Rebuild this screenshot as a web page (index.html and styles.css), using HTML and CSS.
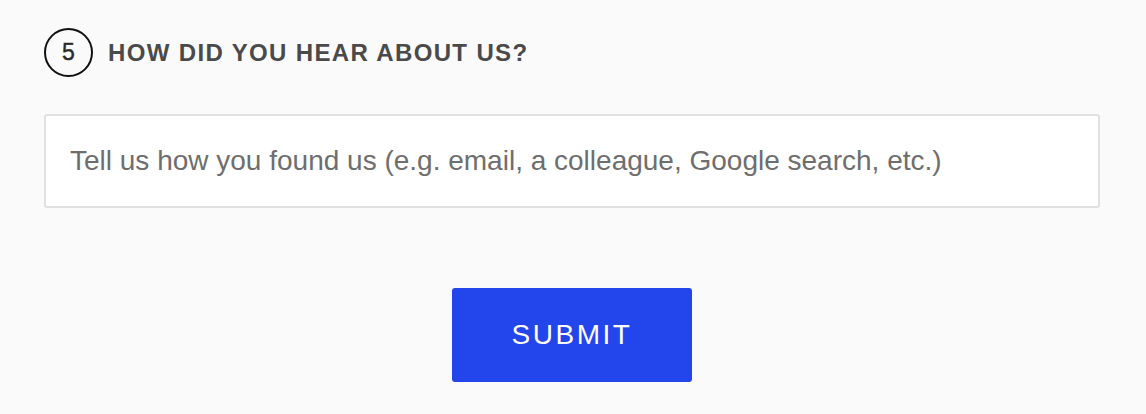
FILE: index.html
```html
<!DOCTYPE html>
<html>
<head>
    <meta charset="UTF-8">
    <meta name="viewport" content="width=device-width, initial-scale=1.0">
    <title>How did you hear about us?</title>
    <link rel="stylesheet" href="styles.css">
</head>
<body>
    <form class="survey">
        <div class="question">
            <span class="step">5</span>
            <label for="source">HOW DID YOU HEAR ABOUT US?</label>
        </div>
        <input type="text" id="source" placeholder="Tell us how you found us (e.g. email, a colleague, Google search, etc.)">
        <div class="actions">
            <button type="submit">SUBMIT</button>
        </div>
    </form>
</body>
</html>
```

FILE: styles.css
```css
body {
    margin: 0;
    background: #fafafa;
    font-family: "Liberation Sans", Arial, sans-serif;
}
.survey {
    padding: 28px 46px 0 44px;
}
.question {
    display: flex;
    align-items: center;
    gap: 15px;
}
.step {
    width: 45px;
    height: 45px;
    border: 2px solid #111;
    border-radius: 50%;
    display: flex;
    align-items: center;
    justify-content: center;
    font-size: 23px;
    color: #2a2a2a;
    -webkit-text-stroke: 0.4px #2a2a2a;
}
.question label {
    font-size: 24px;
    font-weight: bold;
    letter-spacing: 1.35px;
    color: #4a4a4a;
}
input {
    display: block;
    width: 100%;
    height: 94px;
    margin-top: 37px;
    padding: 0 24px;
    box-sizing: border-box;
    border: 2px solid #e0e0e0;
    border-radius: 3px;
    background: #fff;
    font-family: inherit;
    font-size: 28px;
}
input::placeholder {
    color: #6e6e6e;
}
.actions {
    display: flex;
    justify-content: center;
    margin-top: 80px;
}
button {
    width: 240px;
    height: 94px;
    background: #2345ec;
    color: #fff;
    border: none;
    border-radius: 3px;
    font-family: inherit;
    font-size: 28px;
    letter-spacing: 2.5px;
}
```
